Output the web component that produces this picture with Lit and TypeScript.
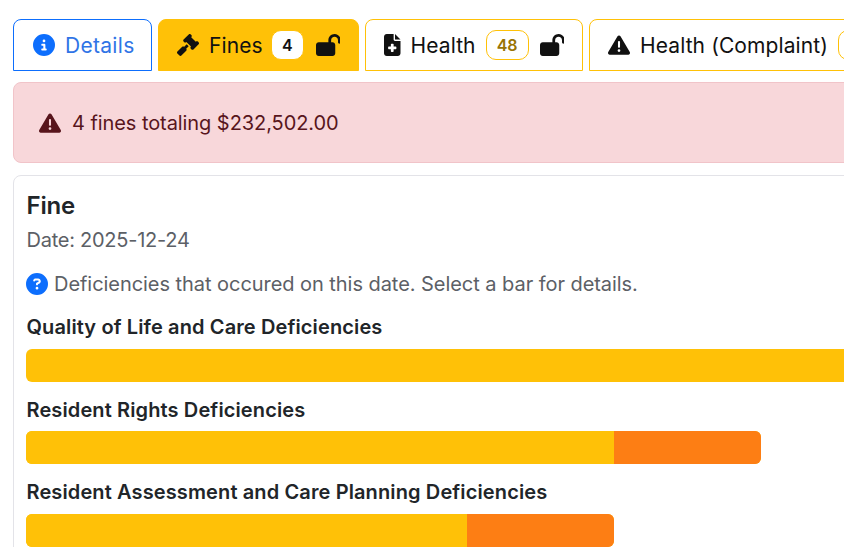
import { LitElement, css, html, svg } from "lit";
import { customElement } from "lit/decorators.js";

// font-awesome style solid icons, keyed by name
const ICONS: Record<string, [number, string]> = {
  info: [512, "M256 512A256 256 0 1 0 256 0a256 256 0 1 0 0 512zM216 336h24V272H216c-13.3 0-24-10.7-24-24s10.7-24 24-24h48c13.3 0 24 10.7 24 24v88h8c13.3 0 24 10.7 24 24s-10.7 24-24 24H216c-13.3 0-24-10.7-24-24s10.7-24 24-24zm40-208a32 32 0 1 1 0 64 32 32 0 1 1 0-64z"],
  question: [512, "M256 512A256 256 0 1 0 256 0a256 256 0 1 0 0 512zM169.8 165.3c7.9-22.3 29.1-37.3 52.8-37.3h58.3c34.9 0 63.1 28.3 63.1 63.1c0 22.6-12.1 43.5-31.7 54.8L280 264.4c-.2 13-10.9 23.6-24 23.6c-13.3 0-24-10.7-24-24V250.5c0-8.6 4.6-16.5 12.1-20.8l44.3-25.4c4.7-2.7 7.6-7.7 7.6-13.1c0-8.4-6.8-15.1-15.1-15.1H222.6c-3.4 0-6.4 2.1-7.5 5.3l-.4 1.2c-4.4 12.5-18.2 19-30.6 14.6s-19-18.2-14.6-30.6l.4-1.2zM224 352a32 32 0 1 1 64 0 32 32 0 1 1 -64 0z"],
  warning: [512, "M256 32c14.2 0 27.3 7.5 34.5 19.8l216 368c7.3 12.4 7.3 27.7 .2 40.1S486.3 480 472 480H40c-14.3 0-27.6-7.7-34.7-20.1s-7-27.8 .2-40.1l216-368C228.7 39.5 241.8 32 256 32zm0 128c-13.3 0-24 10.7-24 24V296c0 13.3 10.7 24 24 24s24-10.7 24-24V184c0-13.3-10.7-24-24-24zm32 224a32 32 0 1 0 -64 0 32 32 0 1 0 64 0z"],
  lockOpen: [576, "M352 144c0-44.2 35.8-80 80-80s80 35.8 80 80v48c0 17.7 14.3 32 32 32s32-14.3 32-32V144C576 64.5 511.5 0 432 0S288 64.5 288 144v48H64c-35.3 0-64 28.7-64 64V448c0 35.3 28.7 64 64 64H384c35.3 0 64-28.7 64-64V256c0-35.3-28.7-64-64-64H352V144z"],
  gavel: [512, "M318.6 9.4c-12.5-12.5-32.8-12.5-45.3 0l-120 120c-12.5 12.5-12.5 32.8 0 45.3l16 16c12.5 12.5 32.8 12.5 45.3 0l4-4L325.4 293.4l-4 4c-12.5 12.5-12.5 32.8 0 45.3l16 16c12.5 12.5 32.8 12.5 45.3 0l120-120c12.5-12.5 12.5-32.8 0-45.3l-16-16c-12.5-12.5-32.8-12.5-45.3 0l-4 4L330.6 74.6l4-4c12.5-12.5 12.5-32.8 0-45.3l-16-16zm-152 288c-12.5-12.5-32.8-12.5-45.3 0l-112 112c-12.5 12.5-12.5 32.8 0 45.3l48 48c12.5 12.5 32.8 12.5 45.3 0l112-112c12.5-12.5 12.5-32.8 0-45.3l-1.4-1.4L272 285.3 226.7 240 168 298.7l-1.4-1.4z"],
  fileMedical: [384, "M64 0C28.7 0 0 28.7 0 64V448c0 35.3 28.7 64 64 64H320c35.3 0 64-28.7 64-64V160H256c-17.7 0-32-14.3-32-32V0H64zM256 0V128H384L256 0zM160 240c0-8.8 7.2-16 16-16h32c8.8 0 16 7.2 16 16v48h48c8.8 0 16 7.2 16 16v32c0 8.8-7.2 16-16 16H224v48c0 8.8-7.2 16-16 16H176c-8.8 0-16-7.2-16-16V352H112c-8.8 0-16-7.2-16-16V304c0-8.8 7.2-16 16-16h48V240z"],
};

const icon = (name: string) => {
  const [w, d] = ICONS[name];
  return html`<svg class="icon" viewBox="0 0 ${w} 512" aria-hidden="true">${svg`<path fill="currentColor" d=${d}></path>`}</svg>`;
};

const CHARTS = [
  { title: "Quality of Life and Care Deficiencies", yellow: 1176, orange: 0 },
  { title: "Resident Rights Deficiencies", yellow: 588, orange: 147 },
  { title: "Resident Assessment and Care Planning Deficiencies", yellow: 441, orange: 147 },
];

@customElement("app-root")
export class AppRoot extends LitElement {
  static styles = css`
    :host {
      display: block;
      width: 844px;
      height: 547px;
      overflow: hidden;
      background: #fff;
      color: #212529;
      font-family: Inter, "Liberation Sans", sans-serif;
    }

    .page {
      width: 1300px;
      padding: 19px 0 0 13px;
      box-sizing: border-box;
    }

    .icon {
      display: block;
      height: 22px;
      flex: none;
    }

    .tabs {
      display: flex;
      gap: 6px;
      margin-bottom: 11px;
    }

    .tab {
      display: flex;
      align-items: center;
      height: 52px;
      box-sizing: border-box;
      padding: 0 18px;
      border: 1px solid #ffc107;
      border-radius: 8px 8px 0 0;
      font-size: 21px;
      letter-spacing: 0.1px;
      color: #111;
      white-space: nowrap;
    }

    .tab.details {
      width: 139px;
      padding-left: 19px;
      gap: 10px;
      border-color: #0d6efd;
      color: #2f74e6;
      letter-spacing: 0.3px;
    }

    .details .icon {
      color: #0d6efd;
    }

    .tab.fines {
      width: 201px;
      background: #ffc107;
    }

    .tab.health {
      width: 218px;
    }

    .tab.complaint {
      width: 400px;
    }

    .label {
      margin-left: 10px;
    }

    .count {
      display: flex;
      align-items: center;
      justify-content: center;
      flex: none;
      height: 30px;
      width: 33px;
      box-sizing: border-box;
      margin-left: 10px;
      border: 1px solid #ffc107;
      border-radius: 10px;
      background: #fff;
      font-size: 16px;
      font-weight: 600;
      letter-spacing: 0;
    }

    .fines .count {
      margin-left: 8px;
    }

    .health .count,
    .complaint .count {
      width: 43px;
      color: #997404;
    }

    .lock {
      margin-left: 11px;
    }

    .fines .lock {
      margin-left: 12px;
    }

    .alert {
      display: flex;
      align-items: center;
      gap: 11px;
      height: 81px;
      box-sizing: border-box;
      margin-bottom: 12px;
      padding-left: 25px;
      border: 1px solid #f1c4c9;
      border-radius: 8px;
      background: #f8d7da;
      color: #58151c;
      font-size: 20px;
      letter-spacing: -0.07px;
    }

    .card {
      padding: 13px 12px;
      border: 1px solid #e3e3e8;
      border-radius: 8px;
    }

    h2 {
      margin: 0 0 4px;
      padding-left: 0.5px;
      font-size: 24px;
      line-height: 34px;
      font-weight: 600;
      letter-spacing: -0.2px;
    }

    .date {
      padding-left: 0.5px;
      font-size: 20px;
      line-height: 26px;
      letter-spacing: -0.25px;
      color: #5c6066;
      margin-bottom: 18.3px;
    }

    .hint {
      display: flex;
      align-items: center;
      gap: 6px;
      font-size: 20px;
      line-height: 26px;
      letter-spacing: -0.05px;
      color: #5c6066;
      margin-bottom: 18px;
    }

    .hint .icon {
      color: #0d6efd;
    }

    h3 {
      margin: 0 0 9.5px;
      padding-left: 0.5px;
      font-size: 20px;
      line-height: 24px;
      font-weight: 600;
      letter-spacing: 0.12px;
    }

    .bar {
      display: flex;
      height: 33px;
      margin-bottom: 16px;
      border-radius: 6px;
      overflow: hidden;
      background: #ffc107;
    }

    .bar span {
      display: block;
    }

    .bar .y {
      background: #ffc107;
    }

    .bar .o {
      background: #fd7e14;
    }
  `;

  render() {
    return html`
      <div class="page">
        <div class="tabs">
          <div class="tab details">${icon("info")}<span>Details</span></div>
          <div class="tab fines">
            ${icon("gavel")}<span class="label">Fines</span>
            <span class="count">4</span>
            <span class="lock">${icon("lockOpen")}</span>
          </div>
          <div class="tab health">
            ${icon("fileMedical")}<span class="label">Health</span>
            <span class="count">48</span>
            <span class="lock">${icon("lockOpen")}</span>
          </div>
          <div class="tab complaint">
            ${icon("warning")}<span class="label">Health (Complaint)</span>
            <span class="count"></span>
          </div>
        </div>

        <div class="alert">${icon("warning")}<span>4 fines totaling $232,502.00</span></div>

        <div class="card">
          <h2>Fine</h2>
          <div class="date">Date: 2025-12-24</div>
          <div class="hint">${icon("question")}<span>Deficiencies that occured on this date. Select a bar for details.</span></div>
          ${CHARTS.map(
            (c) => html`
              <h3>${c.title}</h3>
              <div class="bar" style="width:${c.yellow + c.orange}px">
                <span class="y" style="width:${c.yellow}px"></span>
                <span class="o" style="width:${c.orange}px"></span>
              </div>
            `
          )}
        </div>
      </div>
    `;
  }
}
